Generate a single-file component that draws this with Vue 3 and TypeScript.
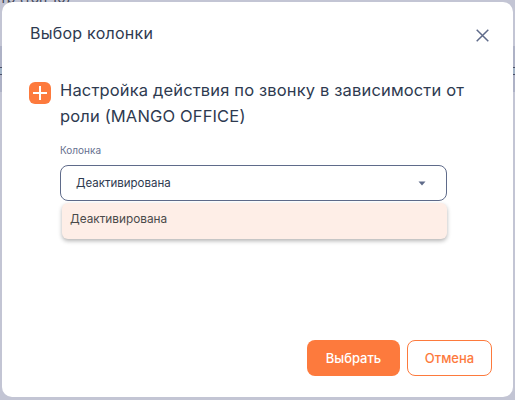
<template>
  <div class="backdrop">
    <span class="page-text">тр (топ 10)</span>
    <span class="page-cell left"></span>
    <span class="page-cell right"></span>
    <section class="modal">
      <header class="modal-head">
        <h2 class="modal-title">Выбор колонки</h2>
        <button class="close" type="button" aria-label="Закрыть">
          <svg width="13" height="13" viewBox="0 0 13 13" fill="none">
            <path d="M0.7 0.7l11.6 11.6M12.3 0.7L0.7 12.3" stroke="#5f6b8a" stroke-width="1.5" />
          </svg>
        </button>
      </header>

      <div class="action">
        <span class="plus">
          <svg width="22" height="22" viewBox="0 0 22 22" fill="none">
            <path d="M11 4v14M4 11h14" stroke="#fff" stroke-width="2" />
          </svg>
        </span>
        <p class="action-name">{{ actionName }}</p>
      </div>

      <div class="field">
        <label class="field-label">Колонка</label>
        <div class="select">
          <span>{{ selected }}</span>
          <svg class="caret" width="8" height="5" viewBox="0 0 8 5">
            <path d="M0.5 0.5h7L4 4.5z" fill="#5f6b8a" />
          </svg>
        </div>
        <ul class="options">
          <li v-for="opt in options" :key="opt" class="option">{{ opt }}</li>
        </ul>
      </div>

      <footer class="modal-foot">
        <button class="btn primary" type="button">Выбрать</button>
        <button class="btn outline" type="button">Отмена</button>
      </footer>
    </section>
  </div>
</template>

<script setup lang="ts">
const actionName = 'Настройка действия по звонку в зависимости от роли (MANGO OFFICE)'
const selected = 'Деактивирована'
const options: string[] = ['Деактивирована']
</script>

<style>
html,
body {
  margin: 0;
  overflow: hidden;
}
</style>

<style scoped>
.backdrop {
  position: relative;
  width: 515px;
  height: 400px;
  box-sizing: border-box;
  padding: 2px 2px 3px;
  overflow: hidden;
  background: #c3c5d4;
  font-family: Inter, Roboto, sans-serif;
}

/* куски страницы под модалкой */
.page-text {
  position: absolute;
  top: -10px;
  left: 0;
  font-size: 14px;
  line-height: 16px;
  color: #3d4658;
  white-space: nowrap;
}

.page-cell {
  position: absolute;
  top: 46px;
  width: 2px;
  height: 46px;
  background: linear-gradient(
    #aeb2c6 21px,
    #4a5068 21px,
    #4a5068 22px,
    #a3b4c8 22px,
    #a3b4c8 28px,
    #4a5068 28px,
    #4a5068 29px,
    #aeb2c6 29px
  );
}

.page-cell.left {
  left: 0;
}

.page-cell.right {
  right: 0;
}

.modal {
  position: relative;
  height: 100%;
  box-sizing: border-box;
  display: flex;
  flex-direction: column;
  padding: 20px 21px 21px 27px;
  background: #fff;
  border-radius: 10px;
}

.modal-head {
  display: flex;
  align-items: center;
  justify-content: space-between;
  height: 22px;
}

.modal-title {
  margin: 0 0 0 1px;
  font-size: 16px;
  font-weight: 400;
  letter-spacing: 0.25px;
  color: #2e3a50;
}

.close {
  display: flex;
  padding: 0;
  margin: 5px 3px 0 0;
  border: 0;
  background: none;
}

.action {
  display: flex;
  gap: 9px;
  margin-top: 33px;
}

.plus {
  flex: none;
  display: flex;
  width: 22px;
  height: 22px;
  margin-top: 5px;
  background: #fd7a3d;
  border-radius: 6px;
}

.action-name {
  margin: 0;
  width: 420px;
  font-size: 16.5px;
  line-height: 26px;
  letter-spacing: 0.15px;
  color: #2e3a50;
}

.field {
  margin: 14px 45px 0 31px;
}

.field-label {
  display: block;
  font-size: 10px;
  line-height: 14px;
  color: #66718f;
}

.select {
  display: flex;
  align-items: center;
  justify-content: space-between;
  box-sizing: border-box;
  height: 36px;
  margin-top: 8px;
  padding: 0 20px 0 15px;
  background: #fff;
  border: 1px solid #5f6b8a;
  border-radius: 8px;
  font-size: 11.5px;
  color: #2e3a50;
}

.options {
  margin: 2px 0 0 2px;
  padding: 0;
  list-style: none;
  background: #feeee7;
  border-radius: 6px;
  box-shadow: 0 2px 4px rgba(0, 0, 0, 0.3);
}

.option {
  height: 36px;
  padding-left: 8px;
  font-size: 11.8px;
  line-height: 33px;
  color: #4a4a4a;
}

.modal-foot {
  display: flex;
  justify-content: flex-end;
  gap: 7px;
  margin-top: auto;
}

.btn {
  height: 36px;
  border-radius: 8px;
  font-family: inherit;
  font-size: 13px;
  font-weight: 500;
}

.primary {
  width: 93px;
  background: #fd7a3d;
  border: 0;
  color: #fff;
}

.outline {
  width: 85px;
  background: #fff;
  border: 1px solid #fd7a3d;
  color: #fd7a3d;
}
</style>
